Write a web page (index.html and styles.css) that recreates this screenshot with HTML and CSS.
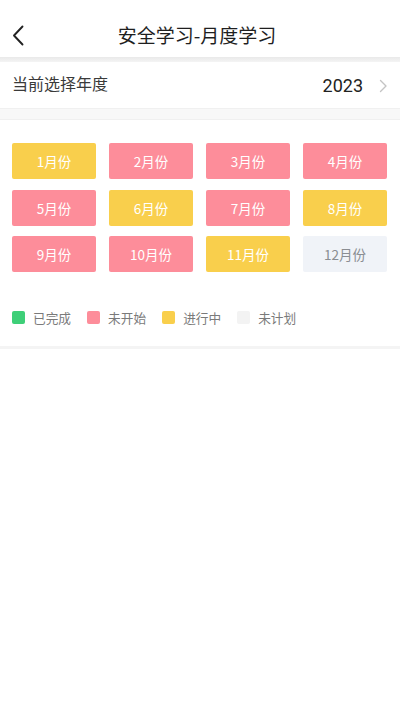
FILE: index.html
```html
<!DOCTYPE html>
<html lang="zh-CN">
<head>
<meta charset="utf-8">
<meta name="viewport" content="width=device-width, initial-scale=1">
<title>安全学习-月度学习</title>
<link rel="stylesheet" href="styles.css">
</head>
<body>
<header class="header">
  <div class="back">
    <svg width="12" height="21" viewBox="0 0 12 21"><path d="M10.5 1.5 L2 10.5 L10.5 19.5" fill="none" stroke="#222" stroke-width="1.9" stroke-linecap="round" stroke-linejoin="round"/></svg>
  </div>
  <h1 class="title">安全学习-月度学习</h1>
  <div class="spacer"></div>
</header>
<div class="band-top"></div>
<div class="year-row">
  <span class="year-label">当前选择年度</span>
  <span class="year-value">2023
    <svg class="chev" width="9" height="14" viewBox="0 0 9 14"><path d="M1.5 1.5 L7 7 L1.5 12.5" fill="none" stroke="#c4c4c4" stroke-width="1.4" stroke-linecap="round" stroke-linejoin="round"/></svg>
  </span>
</div>
<div class="band-mid"></div>
<main class="content">
  <div class="grid">
    <div class="month going">1月份</div>
    <div class="month todo">2月份</div>
    <div class="month todo">3月份</div>
    <div class="month todo">4月份</div>
    <div class="month todo">5月份</div>
    <div class="month going">6月份</div>
    <div class="month todo">7月份</div>
    <div class="month going">8月份</div>
    <div class="month todo">9月份</div>
    <div class="month todo">10月份</div>
    <div class="month going">11月份</div>
    <div class="month none">12月份</div>
  </div>
  <div class="legend">
    <div class="item"><span class="sq sq-done"></span><span class="lt">已完成</span></div>
    <div class="item"><span class="sq sq-todo"></span><span class="lt">未开始</span></div>
    <div class="item"><span class="sq sq-going"></span><span class="lt">进行中</span></div>
    <div class="item"><span class="sq sq-none"></span><span class="lt">未计划</span></div>
  </div>
  <div class="rule"></div>
</main>
</body>
</html>
```
FILE: styles.css
```css
* { box-sizing: border-box; }
html, body {
  margin: 0;
  padding: 0;
  background: #fff;
  font-family: "Noto Sans CJK SC", "Noto Sans", sans-serif;
  color: #333;
}
.header {
  height: 57px;
  display: grid;
  grid-template-columns: 1fr auto 1fr;
  align-items: center;
  padding: 13px 0 0 0;
}
.back {
  display: flex;
  align-items: center;
  height: 21px;
  margin-left: 12px;
}
.back svg { display: block; }
.title {
  margin: 0 6px 0 0;
  font-size: 19px;
  font-weight: 400;
  color: #1f1f1f;
  line-height: 24px;
}
.band-top {
  height: 5px;
  background: linear-gradient(#e9e9e9, #f4f4f4);
}
.year-row {
  height: 46px;
  display: flex;
  align-items: center;
  justify-content: space-between;
  padding: 0 12px 0 12px;
}
.year-label {
  font-size: 16px;
  color: #3a3a3a;
  margin-top: -4px;
}
.year-value {
  display: flex;
  align-items: center;
  font-family: "Roboto", "Noto Sans", sans-serif;
  font-size: 18px;
  color: #222;
  margin-top: 1px;
}
.chev {
  display: block;
  margin-left: 16px;
}
.band-mid {
  height: 12px;
  background: #f8f8f8;
  border-top: 1px solid #f0f0f0;
  border-bottom: 1px solid #f0f0f0;
}
.content {
  padding-top: 23px;
}
.grid {
  display: grid;
  grid-template-columns: repeat(4, 84px);
  column-gap: 13px;
  row-gap: 10.5px;
  padding: 0 13px 0 12px;
}
.month {
  height: 36px;
  border-radius: 2px;
  display: flex;
  align-items: center;
  justify-content: center;
  font-size: 13.5px;
  color: #fff;
}
.going { background: #f9cf4c; }
.todo { background: #fd8d9a; }
.none { background: #f0f3f8; color: #8a8d92; }
.legend {
  display: flex;
  align-items: center;
  gap: 16px;
  padding: 0 12px;
  margin-top: 39px;
  height: 13px;
}
.item {
  display: flex;
  align-items: center;
  gap: 8px;
}
.sq {
  width: 13px;
  height: 13px;
  border-radius: 2px;
  display: block;
}
.sq-done { background: #3ecf78; }
.sq-todo { background: #fd8d9a; }
.sq-going { background: #f9cf4c; }
.sq-none { background: #f3f3f3; }
.lt {
  font-size: 12.7px;
  color: #7a7a7a;
  line-height: 13px;
}
.rule {
  margin-top: 22px;
  height: 3px;
  background: #f4f4f4;
}
```
